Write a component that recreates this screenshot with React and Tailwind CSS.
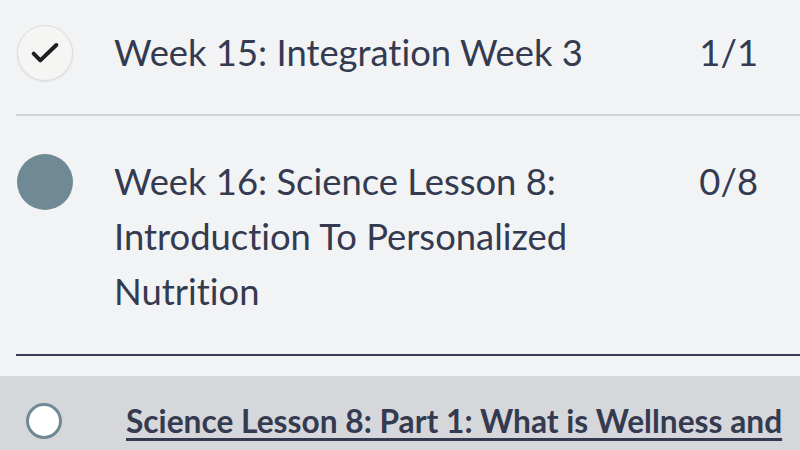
import React from 'react';

function CheckCircle() {
  return (
    <div className="w-[56px] h-[56px] rounded-full bg-[#f5f5f3] border border-[#dcdcdc] flex items-center justify-center shrink-0 shadow-[0_1px_2px_rgba(0,0,0,0.08)]">
      <svg width="32" height="32" viewBox="0 0 24 24" fill="none" stroke="#1f1f22" strokeWidth="3" strokeLinecap="round" strokeLinejoin="round">
        <path d="M3.5 12.5l5 5L20.5 6" />
      </svg>
    </div>
  );
}

function FilledCircle() {
  return <div className="w-[56px] h-[56px] rounded-full bg-[#6f8a94] shrink-0" />;
}

export default function App() {
  return (
    <div className="w-[800px] h-[450px] overflow-hidden bg-[#f2f3f5] text-[#343a4f] [font-variant-ligatures:none]" style={{ fontFamily: 'Lato, "Noto Sans", sans-serif' }}>
      <div className="pl-[16px]">
        <div className="flex items-start pt-[25px] pb-[34px] pr-[42px] border-b-2 border-[#d3d4d8]">
          <div className="w-[98px] h-[55px] flex items-center shrink-0 pl-[1px]">
            <CheckCircle />
          </div>
          <div className="flex-1 text-[36.4px] leading-[55px]">Week 15: Integration Week 3</div>
          <div className="text-[36.4px] leading-[55px]">1/1</div>
        </div>
        <div className="flex items-start pt-[38px] pb-[35px] pr-[42px] border-b-2 border-[#3b3e52]">
          <div className="w-[98px] h-[55px] flex items-center shrink-0 pl-[1px]">
            <FilledCircle />
          </div>
          <div className="flex-1 text-[36.4px] leading-[55px]">
            Week 16: Science Lesson 8:<br />Introduction To Personalized<br />Nutrition
          </div>
          <div className="text-[36.4px] leading-[55px]">0/8</div>
        </div>
      </div>
      <div className="mt-[20px] bg-[#d6d7db] pt-[22px] pb-[20px] flex items-start">
        <div className="w-[126px] h-[46px] flex items-center shrink-0 pl-[26px]">
          <div className="w-[36px] h-[36px] rounded-full bg-white border-[3px] border-[#6f8a94]" />
        </div>
        <div className="text-[31.7px] leading-[46px] font-bold underline decoration-[3px] underline-offset-[5px] whitespace-nowrap">
          Science Lesson 8: Part 1: What is Wellness and
        </div>
      </div>
    </div>
  );
}
